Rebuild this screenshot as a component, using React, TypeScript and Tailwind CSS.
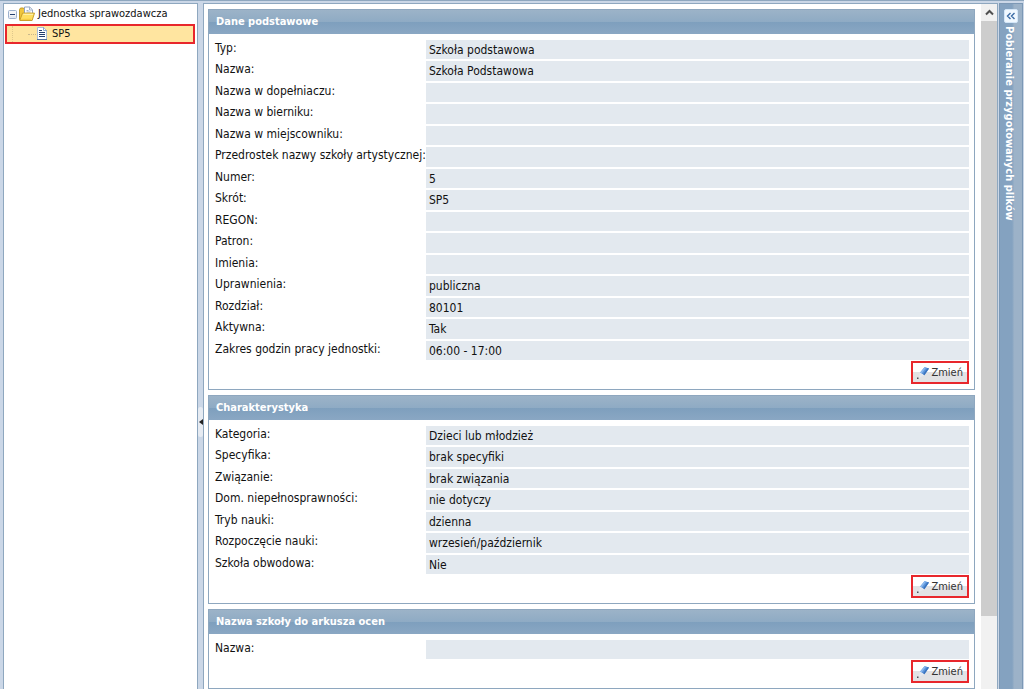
type Field = { label: string; value?: string };

const basicFields: Field[] = [
  { label: "Typ:", value: "Szkoła podstawowa" },
  { label: "Nazwa:", value: "Szkoła Podstawowa" },
  { label: "Nazwa w dopełniaczu:" },
  { label: "Nazwa w bierniku:" },
  { label: "Nazwa w miejscowniku:" },
  { label: "Przedrostek nazwy szkoły artystycznej:" },
  { label: "Numer:", value: "5" },
  { label: "Skrót:", value: "SP5" },
  { label: "REGON:" },
  { label: "Patron:" },
  { label: "Imienia:" },
  { label: "Uprawnienia:", value: "publiczna" },
  { label: "Rozdział:", value: "80101" },
  { label: "Aktywna:", value: "Tak" },
  { label: "Zakres godzin pracy jednostki:", value: "06:00 - 17:00" },
];

const profileFields: Field[] = [
  { label: "Kategoria:", value: "Dzieci lub młodzież" },
  { label: "Specyfika:", value: "brak specyfiki" },
  { label: "Związanie:", value: "brak związania" },
  { label: "Dom. niepełnosprawności:", value: "nie dotyczy" },
  { label: "Tryb nauki:", value: "dzienna" },
  { label: "Rozpoczęcie nauki:", value: "wrzesień/październik" },
  { label: "Szkoła obwodowa:", value: "Nie" },
];

const sheetFields: Field[] = [{ label: "Nazwa:" }];

function FolderIcon() {
  return (
    <svg width="16" height="16" viewBox="0 0 16 16" fill="none">
      <path d="M.5 13.5V3.7l1-1.7h3l1 1.5h2v10z" fill="#f0c63c" stroke="#c29a2a" />
      <path d="M5.5 1h5.2l2.8 2.8V9h-8z" fill="#fff" stroke="#93a5c2" />
      <path d="M10.5 1v3h3M7.5 4.5h2M7.5 6h4" stroke="#a3b2cb" />
      <path d="M.8 14.5l2.7-7.4h12l-2.4 7.4z" fill="#ffdf60" stroke="#c9a02c" strokeLinejoin="round" />
      <path d="M4.3 8.3h9.8" stroke="#fff4b8" />
      <path d="M2.2 13.3h10" stroke="#f3c73e" />
    </svg>
  );
}

function DocIcon() {
  return (
    <svg width="12" height="14" viewBox="0 0 12 14" fill="none">
      <path d="M1.5.5h6l3 3v9h-9z" fill="#fff" stroke="#a9bdd8" />
      <path d="M1 12.5h10" stroke="#56709a" />
      <path d="M7.5 0v3.5H11" stroke="#8fa9cc" />
      <path d="M3 3.5h3M3 5.5h6M3 7.5h6M3 9.5h6" stroke="#243d6c" />
    </svg>
  );
}

function ExpandIcon() {
  return (
    <svg width="9" height="9" viewBox="0 0 9 9" fill="none">
      <rect x=".5" y=".5" width="8" height="8" rx="1" fill="#f3f5f9" stroke="#9db0cd" />
      <path d="M1 6.5h7v1H1z" fill="#d3dcea" />
      <path d="M2 4.5h5" stroke="#24406f" />
    </svg>
  );
}

function PencilIcon() {
  return (
    <svg width="14" height="14" viewBox="0 0 14 14">
      <path d="M4 6.8L8.6 1l4.4 1.6-4.6 6.6z" fill="#5d95da" />
      <path d="M4 6.8L8.6 1l1.6.6-4.6 5.8z" fill="#8ab8ee" />
      <path d="M6.9 8.6l4.7-6.5 1.4.5-4.6 6.6z" fill="#3b74bf" />
      <path d="M4 6.8l4.4 2.4-5.9 3z" fill="#e6e9ef" />
      <path d="M1 11.5h1.5V13H1z" fill="#4b4f57" />
    </svg>
  );
}

function EditButton() {
  return (
    <div className="flex justify-end pr-[5px]">
      <button
        type="button"
        className="flex h-[23px] items-center gap-px border-2 border-[#e8272c] bg-linear-to-b from-white from-50% to-[#e2e2e4] to-50% pt-px pr-1 pl-[3px] text-[11px] text-[#333]"
      >
        <PencilIcon />
        Zmień
      </button>
    </div>
  );
}

function Section({ title, fields }: { title: string; fields: Field[] }) {
  return (
    <section className="border border-[#8ea7bf] bg-white pb-[5px]">
      <h2 className="h-6 bg-[linear-gradient(#9cb3c8,#8fabc4_48%,#7e9fbd_50%,#8aa7c3)] px-[7px] text-[11px] leading-6 font-bold text-white">
        {title}
      </h2>
      <dl className="pt-[5px] pr-[5px] pl-[6px] text-[12px]">
        {fields.map((f) => (
          <div key={f.label} className="flex odd:h-[21px] even:h-[22px]">
            <dt className="w-[211px] shrink-0 leading-[18px] whitespace-nowrap">{f.label}</dt>
            <dd className="my-px flex-1 bg-[#e3e9ef] px-[3px] leading-5">{f.value}</dd>
          </div>
        ))}
      </dl>
      <EditButton />
    </section>
  );
}

function Tree() {
  return (
    <nav className="w-[195px] shrink-0 border border-b-0 border-[#8ea7bf] bg-white text-[11px]">
      <div className="flex h-5 items-center pl-1">
        <button type="button" aria-label="Zwiń" className="mr-[2px]">
          <ExpandIcon />
        </button>
        <FolderIcon />
        <span className="ml-[3px]">Jednostka sprawozdawcza</span>
      </div>
      <a
        href="#sp5"
        className="mr-[2px] ml-px flex h-5 items-center border-2 border-[#e8272c] bg-[#ffe5a0] pl-[5px]"
      >
        <span className="h-full w-4 border-l border-dotted border-[#e0c88c]" />
        <span className="w-2 border-t border-dotted border-[#c9b88c]" />
        <DocIcon />
        <span className="ml-1">SP5</span>
      </a>
    </nav>
  );
}

function Scrollbar() {
  return (
    <div className="flex w-4 shrink-0 flex-col bg-[#f1f1f1]">
      <button type="button" aria-label="W górę" className="flex h-[17px] shrink-0 items-center justify-center">
        <svg width="9" height="7" viewBox="0 0 9 7" fill="none">
          <path d="M1 5.5l3.5-3.5L8 5.5" stroke="#505050" strokeWidth="2" />
        </svg>
      </button>
      <div className="min-h-0 flex-1">
        <div className="h-[89%] bg-[#cdcdcd]" />
      </div>
    </div>
  );
}

function FilesPanel() {
  return (
    <aside className="mr-px flex w-6 shrink-0 flex-col items-center border border-b-0 border-[#7c98b5] bg-linear-to-r from-[#84a2c0] from-55% to-[#9cb2c8] to-65% pt-[5px] pr-px">
      <button
        type="button"
        aria-label="Rozwiń"
        className="flex size-[14px] items-center justify-center rounded-[2px] border border-[#d3e6f8] bg-[#f0f8ff]"
      >
        <svg width="10" height="8" viewBox="0 0 10 8" fill="none">
          <path d="M4.5 1l-3 3 3 3M8.5 1l-3 3 3 3" stroke="#3c6ca5" strokeWidth="1.4" />
        </svg>
      </button>
      <h2 className="mt-[3px] mr-1 text-[11px] leading-4 font-bold whitespace-nowrap text-white [writing-mode:vertical-rl]">
        Pobieranie przygotowanych plików
      </h2>
    </aside>
  );
}

export default function App() {
  return (
    <div className="flex h-screen overflow-hidden border-t border-[#8ea7bf] bg-[#cbd7e7] pt-[2px] pl-[3px] font-['DejaVu_Sans_Condensed','DejaVu_Sans',sans-serif] text-[#111]">
      <Tree />
      <div className="flex w-[5px] shrink-0 items-center">
        <button
          type="button"
          aria-label="Zwiń panel"
          className="mt-38 flex h-[30px] w-[5px] items-center justify-end rounded-sm bg-[#e6ebf2]"
        >
          <svg width="4" height="6" viewBox="0 0 4 6">
            <path d="M4 0v6L0 3z" fill="#222" />
          </svg>
        </button>
      </div>
      <main className="mr-px flex min-w-0 flex-1 border border-b-0 border-[#8ea7bf] bg-white">
        <div className="mr-[6px] flex min-w-0 flex-1 flex-col gap-[5px] overflow-hidden pt-[5px] pl-1">
          <Section title="Dane podstawowe" fields={basicFields} />
          <Section title="Charakterystyka" fields={profileFields} />
          <Section title="Nazwa szkoły do arkusza ocen" fields={sheetFields} />
        </div>
        <Scrollbar />
      </main>
      <FilesPanel />
    </div>
  );
}
